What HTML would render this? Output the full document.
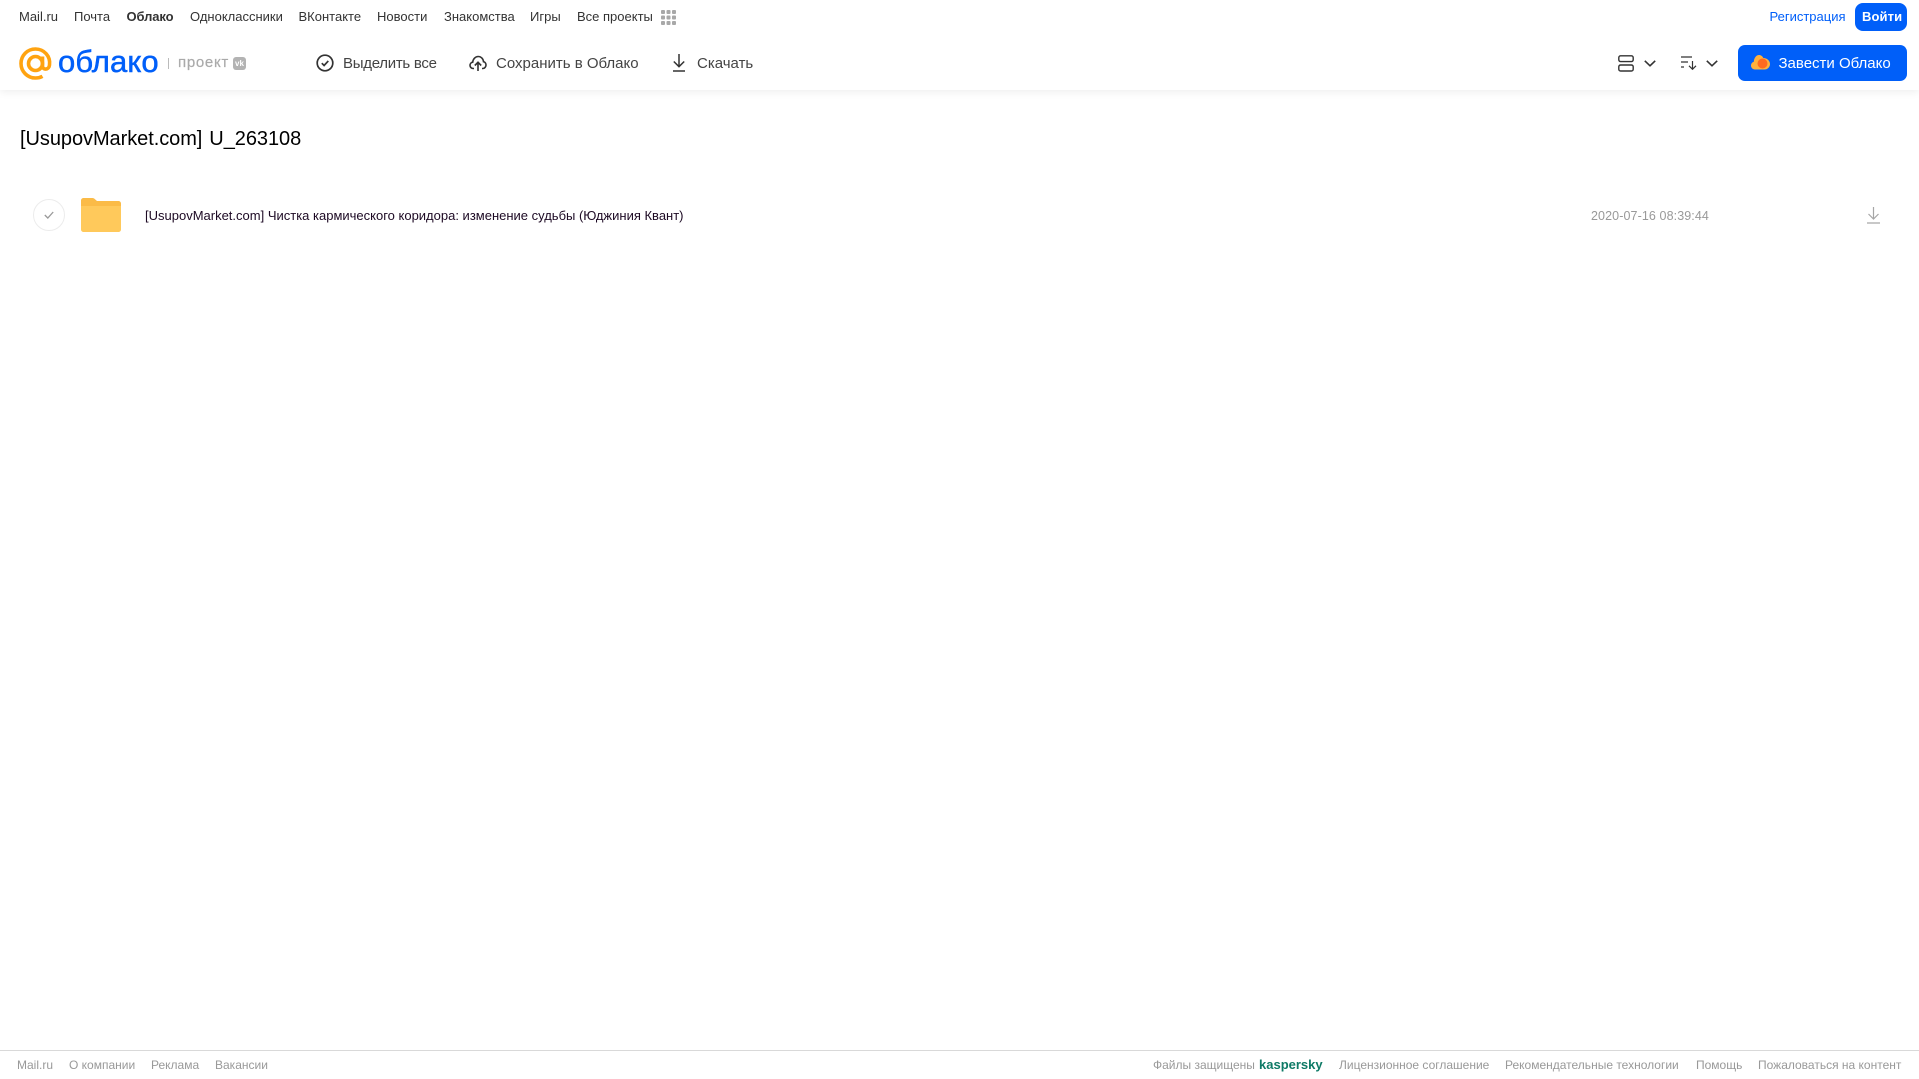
<!DOCTYPE html>
<html lang="ru"><head><meta charset="utf-8"><title>Облако</title>
<style>
html,body{margin:0;padding:0;background:#fff;width:1919px;height:1079px;overflow:hidden}
body{font-family:"Liberation Sans","Noto Sans CJK SC",sans-serif;position:relative}
.t{position:absolute;white-space:nowrap;line-height:20px}
.n{font-size:13px;color:#333;top:7px}
.b{font-size:15px;color:#444;top:53.500px;letter-spacing:0}
.f{font-size:12px;color:#999;top:1055px}
svg{position:absolute;overflow:visible}
</style></head><body>
<div style="position:absolute;left:0;top:0;width:1919px;height:90px;background:#fff;box-shadow:0 2px 8px rgba(0,0,0,.07)"></div>

<span class="t n" style="left:19px">Mail.ru</span>
<span class="t n" style="left:74px">Почта</span>
<span class="t n" style="left:126.500px;font-weight:bold;letter-spacing:-.1px">Облако</span>
<span class="t n" style="left:190px">Одноклассники</span>
<span class="t n" style="left:298.500px">ВКонтакте</span>
<span class="t n" style="left:377px">Новости</span>
<span class="t n" style="left:444px">Знакомства</span>
<span class="t n" style="left:530px">Игры</span>
<span class="t n" style="left:577px">Все проекты</span>
<svg style="left:661px;top:10px" width="15" height="15" fill="#a8a8a8"><rect width="4" height="4" rx="1"/><rect x="5.500" width="4" height="4" rx="1"/><rect x="11" width="4" height="4" rx="1"/><rect y="5.500" width="4" height="4" rx="1"/><rect x="5.500" y="5.500" width="4" height="4" rx="1"/><rect x="11" y="5.500" width="4" height="4" rx="1"/><rect y="11" width="4" height="4" rx="1"/><rect x="5.500" y="11" width="4" height="4" rx="1"/><rect x="11" y="11" width="4" height="4" rx="1"/></svg>

<span class="t n" style="left:1769.500px;color:#005ff9">Регистрация</span>
<div style="position:absolute;left:1855px;top:3px;width:52px;height:28px;border-radius:8px;background:#005ff9"></div>
<span class="t n" style="left:1862px;color:#fff;font-weight:bold;letter-spacing:.1px">Войти</span>

<svg style="left:19px;top:47px" width="33" height="33" viewBox="0 0 33 33" fill="none" stroke="#ffa310" stroke-width="3.600"><circle cx="16.500" cy="16.500" r="7"/><path d="M23.500 9.500v9.500c0 4.200 6.500 4.200 7-1 1.200-8.800-5.500-16-14-16C8.300 2 2 8.500 2 16.500 2 24.600 8.500 31 16.500 31c2.800 0 5-.6 7-1.700"/></svg>
<span class="t" style="left:58px;top:44px;font-size:31px;line-height:36px;color:#005ff9;-webkit-text-stroke:.5px #005ff9;letter-spacing:.1px">облако</span>
<div style="position:absolute;left:168px;top:58px;width:1px;height:11px;background:#bbb"></div>
<span class="t" style="left:178px;top:53px;font-size:15px;color:#aaa;letter-spacing:.7px;-webkit-text-stroke:.2px #aaa">проект</span>
<div style="position:absolute;left:233px;top:57px;width:13px;height:13px;border-radius:3px;background:#b3b3b3"></div>
<span class="t" style="left:235px;top:53.500px;font-size:8px;color:#fff;font-weight:bold">vk</span>

<svg style="left:316px;top:54px" width="18" height="18" viewBox="0 0 18 18" fill="none" stroke="#333" stroke-width="1.700"><circle cx="9" cy="9" r="7.800"/><path d="M5.800 9.200l2.300 2.300 4.200-4.600"/></svg>
<span class="t b" style="left:343px;letter-spacing:-.28px">Выделить все</span>
<svg style="left:469px;top:54px" width="18" height="18" viewBox="0 0 18 18" fill="none" stroke="#333" stroke-width="1.600"><path d="M5 14.500H4.200C2.300 14.500 1 13 1 11.300c0-1.600 1.200-2.900 2.700-3.100C4 5 6.300 2.500 9.200 2.500c2.800 0 5 2.200 5.300 5.200 1.500.3 2.500 1.700 2.500 3.300 0 1.900-1.400 3.500-3.200 3.500H13"/><path d="M9 17V8.500M5.800 11.500L9 8.300l3.200 3.200"/></svg>
<span class="t b" style="left:496px">Сохранить в Облако</span>
<svg style="left:672px;top:54px" width="14" height="18" viewBox="0 0 14 18" fill="none" stroke="#333" stroke-width="1.500"><path d="M7 0v12.500M1.800 7.500L7 12.700l5.200-5.200M1 17h12"/></svg>
<span class="t b" style="left:697px">Скачать</span>

<svg style="left:1618px;top:55px" width="16" height="17" viewBox="0 0 16 17" fill="none" stroke="#333" stroke-width="1.400"><rect x=".8" y=".8" width="14.400" height="5.800" rx="1.800"/><rect x=".8" y="10" width="14.400" height="6" rx="1.800"/></svg>
<svg style="left:1644px;top:60px" width="12" height="7" viewBox="0 0 12 7" fill="none" stroke="#333" stroke-width="1.600"><path d="M.8.800L6 5.800l5.200-5"/></svg>
<svg style="left:1681px;top:56px" width="16" height="14" viewBox="0 0 16 14" fill="none" stroke="#333" stroke-width="1.200"><path d="M0 1h11M0 6h7M0 11h3M11.500 5v8M8 9.800l3.500 3.500L15 9.800"/></svg>
<svg style="left:1706px;top:60px" width="12" height="7" viewBox="0 0 12 7" fill="none" stroke="#333" stroke-width="1.600"><path d="M.8.800L6 5.800l5.200-5"/></svg>

<div style="position:absolute;left:1738px;top:45px;width:169px;height:36px;border-radius:7px;background:#005ff9"></div>
<svg style="left:1751px;top:54px" width="19" height="16" viewBox="0 0 19 16"><path d="M4 15.500C1.500 15.500 0 13.500 0 11.500c0-2 1.300-3.300 2.800-3.800C3 4 5.200 1 8 1c2 0 3.500 1.200 4.300 3 3.500 0 6.700 2.500 6.700 6 0 3-2.300 5.500-5.500 5.500z" fill="#ffb13d"/><circle cx="11.500" cy="9.500" r="5" fill="#ff6a1f"/></svg>
<span class="t" style="left:1778.500px;top:53.500px;font-size:15px;color:#fff">Завести Облако</span>

<span class="t" style="left:20px;top:127px;font-size:20px;line-height:24px;color:#000;word-spacing:1.500px;letter-spacing:-.06px">[UsupovMarket.com] U_263108</span>

<div style="position:absolute;left:33px;top:199px;width:30px;height:30px;border:1px solid #ececec;border-radius:50%"></div>
<svg style="left:44px;top:211px" width="10" height="8" viewBox="0 0 10 8" fill="none" stroke="#999" stroke-width="1.300"><path d="M.8 4l3 3L9.200 1"/></svg>
<svg style="left:81px;top:198px" width="40" height="34" viewBox="0 0 40 34"><path d="M0 2.500C0 1.100 1.100 0 2.500 0h9c1 0 1.900.5 2.500 1.300L16 3h21.500C38.900 3 40 4.100 40 5.500V8H0z" fill="#fbbb47"/><path d="M0 8h40v23.500c0 1.400-1.100 2.500-2.500 2.500h-35C1.100 34 0 32.900 0 31.500z" fill="#ffc95b"/></svg>
<span class="t" style="left:145px;top:206px;font-size:13px;color:#1d0a24">[UsupovMarket.com] Чистка кармического коридора: изменение судьбы (Юджиния Квант)</span>
<span class="t" style="left:1591px;top:206px;font-size:12.500px;color:#999;letter-spacing:.1px">2020-07-16 08:39:44</span>
<svg style="left:1867px;top:207px" width="13" height="17" viewBox="0 0 13 17" fill="none" stroke="#a6a6a6" stroke-width="1.200"><path d="M6.500 0v11.500M1.500 7l5 5 5-5M0 16h13"/></svg>

<div style="position:absolute;left:0;top:1050px;width:1919px;height:1px;background:#d9d9d9"></div>
<span class="t f" style="left:17px">Mail.ru</span>
<span class="t f" style="left:69px">О компании</span>
<span class="t f" style="left:151px">Реклама</span>
<span class="t f" style="left:215px">Вакансии</span>
<span class="t f" style="left:1153px">Файлы защищены</span>
<span class="t f" style="left:1259px;color:#0e7a66;font-weight:bold;font-size:13px">kaspersky</span>
<span class="t f" style="left:1339px">Лицензионное соглашение</span>
<span class="t f" style="left:1505px">Рекомендательные технологии</span>
<span class="t f" style="left:1696px">Помощь</span>
<span class="t f" style="left:1758px">Пожаловаться на контент</span>
</body></html>
